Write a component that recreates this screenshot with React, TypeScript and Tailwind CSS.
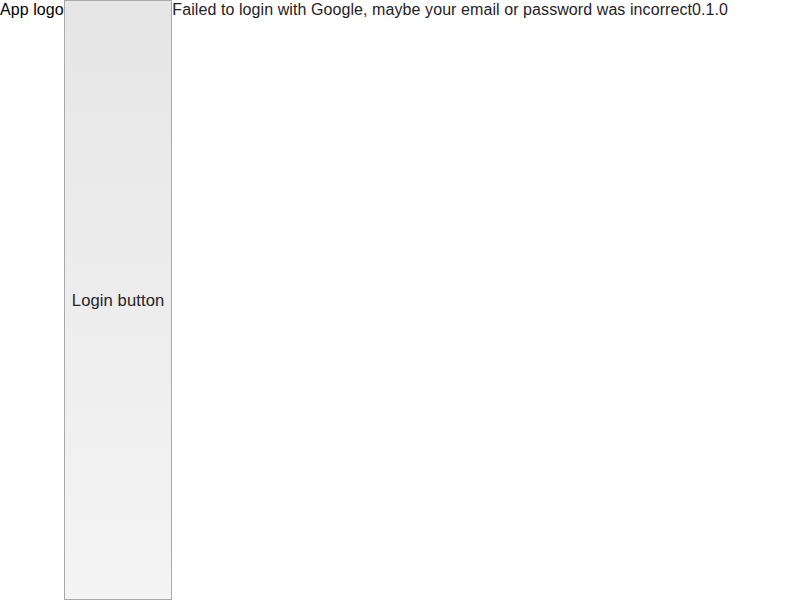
function App() {
  return (
    <div className="flex h-screen items-start font-['Liberation_Sans',Arial,sans-serif] text-base tracking-[0.08px] text-[#1f2328]">
      <span className="text-black leading-[20px]">App logo</span>
      <button
        type="button"
        className="h-full self-stretch border border-[#a9a9a9] bg-gradient-to-b from-[#e6e6e6] to-[#f4f4f4] px-[7px] pt-[2px] text-[16.6px] tracking-[0.1px] text-[#1f2328]"
      >
        Login button
      </button>
      <span className="leading-[20px]">Failed to login with Google, maybe your email or password was incorrect</span>
      <span className="leading-[20px]">0.1.0</span>
    </div>
  );
}

export default App;
